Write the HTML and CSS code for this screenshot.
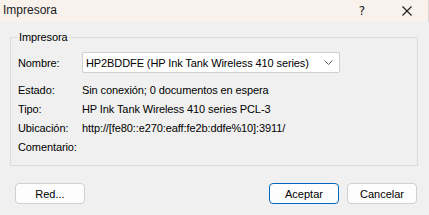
FILE: index.html
```html
<!DOCTYPE html>
<html lang="es">
<head>
<meta charset="utf-8">
<title>Impresora</title>
<link rel="stylesheet" href="styles.css">
</head>
<body>
<div class="dialog">
  <div class="titlebar">
    <span class="title">Impresora</span>
    <span class="help">?</span>
    <span class="close">
      <svg width="10" height="10" viewBox="0 0 10 10"><path d="M0.5 0.5 L9.5 9.5 M9.5 0.5 L0.5 9.5" stroke="#1a1a1a" stroke-width="1.1" fill="none"/></svg>
    </span>
  </div>
  <fieldset class="group">
    <legend class="legend">Impresora</legend>
    <div class="row-name">
      <span class="label">Nombre:</span>
      <div class="combo">
        <span class="combo-text">HP2BDDFE (HP Ink Tank Wireless 410 series)</span>
        <svg class="chev" width="9" height="5" viewBox="0 0 9 5"><path d="M0.5 0.5 L4.5 4.5 L8.5 0.5" stroke="#606060" stroke-width="1" fill="none"/></svg>
      </div>
    </div>
    <div class="rows">
      <div class="row"><span class="label">Estado:</span><span class="value">Sin conexión; 0 documentos en espera</span></div>
      <div class="row"><span class="label">Tipo:</span><span class="value">HP Ink Tank Wireless 410 series PCL-3</span></div>
      <div class="row"><span class="label">Ubicación:</span><span class="value">http://[fe80::e270:eaff:fe2b:ddfe%10]:3911/</span></div>
      <div class="row"><span class="label">Comentario:</span><span class="value"></span></div>
    </div>
  </fieldset>
  <div class="footer">
    <button class="btn">Red...</button>
    <div class="spacer"></div>
    <button class="btn btn-default">Aceptar</button>
    <button class="btn">Cancelar</button>
  </div>
</div>
</body>
</html>
```
FILE: styles.css
```css
html, body {
  margin: 0;
  padding: 0;
}
body {
  background: #f0f0f0;
  font-family: "Liberation Sans", Arial, sans-serif;
  font-size: 11px;
  color: #000;
  width: 429px;
  height: 215px;
  overflow: hidden;
}
.dialog {
  display: flex;
  flex-direction: column;
}
.titlebar {
  height: 22px;
  background: #f8f1ec;
  display: flex;
  align-items: center;
  border-right: 1px solid #d9d6d3;
  box-sizing: border-box;
}
.title {
  font-size: 12px;
  margin-left: 3px;
  color: #1a1a1a;
  flex: 1;
  position: relative;
  top: -1px;
}
.help {
  font-size: 12px;
  font-family: "DejaVu Sans", sans-serif;
  color: #1a1a1a;
  width: 10px;
  margin-right: 35px;
  text-align: center;
}
.close {
  display: flex;
  margin-right: 16px;
}
.group {
  margin: 9px 11px 0 10px;
  padding: 8px 0 8px 7px;
  border: 1px solid #dcdcdc;
  min-width: 0;
  letter-spacing: -0.1px;
}
.legend {
  padding: 0 1px;
  line-height: 13px;
  font-size: 11px;
}
.row-name {
  display: flex;
  align-items: center;
}
.label {
  width: 64px;
  flex: none;
  color: #000;
}
.combo {
  width: 258px;
  height: 21px;
  box-sizing: border-box;
  background: #fff;
  border: 1px solid #cfcfcf;
  border-radius: 2px;
  display: flex;
  align-items: center;
  padding-left: 3px;
}
.combo-text {
  flex: 1;
  white-space: nowrap;
}
.chev {
  margin-right: 6px;
}
.rows {
  margin-top: 8px;
  display: flex;
  flex-direction: column;
}
.row {
  display: flex;
  line-height: 19px;
  height: 19px;
}
.value {
  white-space: nowrap;
}
.footer {
  display: flex;
  margin: 17px 12px 0 15px;
  gap: 8px;
}
.spacer {
  flex: 1;
}
.btn {
  width: 70px;
  height: 21px;
  box-sizing: border-box;
  background: #fdfdfd;
  border: 1px solid #d0d0d0;
  border-radius: 4px;
  font-family: "Liberation Sans", Arial, sans-serif;
  font-size: 11px;
  color: #000;
  padding: 0;
}
.btn-default {
  border-color: #0067c0;
}
```
